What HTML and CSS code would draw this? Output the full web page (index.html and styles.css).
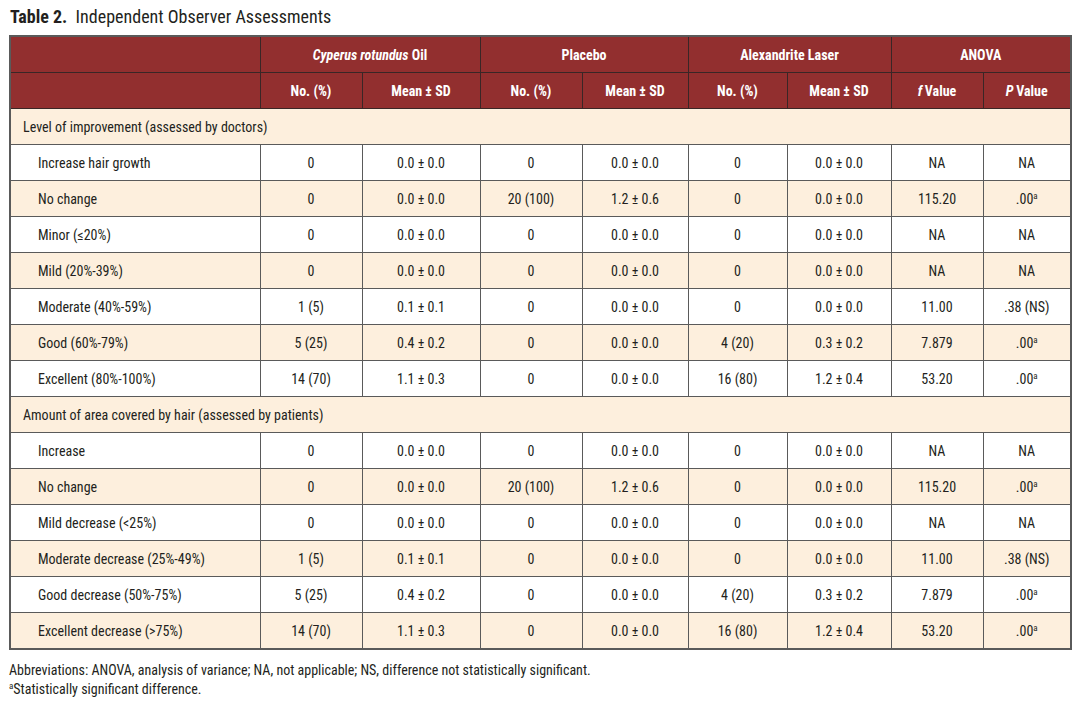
FILE: index.html
```html
<!DOCTYPE html>
<html>
<head>
<meta charset="utf-8">
<link rel="stylesheet" href="styles.css">
</head>
<body>
<div class="page">
  <h1 class="title"><b>Table 2.</b>&nbsp; Independent Observer Assessments</h1>
  <table class="tbl">
    <colgroup>
      <col class="c-label">
      <col class="c-a"><col class="c-b">
      <col class="c-a"><col class="c-c">
      <col class="c-d"><col class="c-e">
      <col class="c-f"><col class="c-g">
    </colgroup>
    <thead>
      <tr>
        <th></th>
        <th colspan="2"><i>Cyperus rotundus</i> Oil</th>
        <th colspan="2">Placebo</th>
        <th colspan="2">Alexandrite Laser</th>
        <th colspan="2">ANOVA</th>
      </tr>
      <tr>
        <th></th>
        <th>No. (%)</th><th>Mean ± SD</th>
        <th>No. (%)</th><th>Mean ± SD</th>
        <th>No. (%)</th><th>Mean ± SD</th>
        <th><i>f</i>&thinsp;Value</th><th><i>P</i>&thinsp;Value</th>
      </tr>
    </thead>
    <tbody>
      <tr class="sec"><td colspan="9">Level of improvement (assessed by doctors)</td></tr>
      <tr><td>Increase hair growth</td><td>0</td><td>0.0 ± 0.0</td><td>0</td><td>0.0 ± 0.0</td><td>0</td><td>0.0 ± 0.0</td><td>NA</td><td>NA</td></tr>
      <tr class="alt"><td>No change</td><td>0</td><td>0.0 ± 0.0</td><td>20 (100)</td><td>1.2 ± 0.6</td><td>0</td><td>0.0 ± 0.0</td><td>115.20</td><td>.00<sup>a</sup></td></tr>
      <tr><td>Minor (≤20%)</td><td>0</td><td>0.0 ± 0.0</td><td>0</td><td>0.0 ± 0.0</td><td>0</td><td>0.0 ± 0.0</td><td>NA</td><td>NA</td></tr>
      <tr class="alt"><td>Mild (20%-39%)</td><td>0</td><td>0.0 ± 0.0</td><td>0</td><td>0.0 ± 0.0</td><td>0</td><td>0.0 ± 0.0</td><td>NA</td><td>NA</td></tr>
      <tr><td>Moderate (40%-59%)</td><td>1 (5)</td><td>0.1 ± 0.1</td><td>0</td><td>0.0 ± 0.0</td><td>0</td><td>0.0 ± 0.0</td><td>11.00</td><td>.38 (NS)</td></tr>
      <tr class="alt"><td>Good (60%-79%)</td><td>5 (25)</td><td>0.4 ± 0.2</td><td>0</td><td>0.0 ± 0.0</td><td>4 (20)</td><td>0.3 ± 0.2</td><td>7.879</td><td>.00<sup>a</sup></td></tr>
      <tr><td>Excellent (80%-100%)</td><td>14 (70)</td><td>1.1 ± 0.3</td><td>0</td><td>0.0 ± 0.0</td><td>16 (80)</td><td>1.2 ± 0.4</td><td>53.20</td><td>.00<sup>a</sup></td></tr>
      <tr class="sec"><td colspan="9">Amount of area covered by hair (assessed by patients)</td></tr>
      <tr><td>Increase</td><td>0</td><td>0.0 ± 0.0</td><td>0</td><td>0.0 ± 0.0</td><td>0</td><td>0.0 ± 0.0</td><td>NA</td><td>NA</td></tr>
      <tr class="alt"><td>No change</td><td>0</td><td>0.0 ± 0.0</td><td>20 (100)</td><td>1.2 ± 0.6</td><td>0</td><td>0.0 ± 0.0</td><td>115.20</td><td>.00<sup>a</sup></td></tr>
      <tr><td>Mild decrease (&lt;25%)</td><td>0</td><td>0.0 ± 0.0</td><td>0</td><td>0.0 ± 0.0</td><td>0</td><td>0.0 ± 0.0</td><td>NA</td><td>NA</td></tr>
      <tr class="alt"><td>Moderate decrease (25%-49%)</td><td>1 (5)</td><td>0.1 ± 0.1</td><td>0</td><td>0.0 ± 0.0</td><td>0</td><td>0.0 ± 0.0</td><td>11.00</td><td>.38 (NS)</td></tr>
      <tr><td>Good decrease (50%-75%)</td><td>5 (25)</td><td>0.4 ± 0.2</td><td>0</td><td>0.0 ± 0.0</td><td>4 (20)</td><td>0.3 ± 0.2</td><td>7.879</td><td>.00<sup>a</sup></td></tr>
      <tr class="alt"><td>Excellent decrease (&gt;75%)</td><td>14 (70)</td><td>1.1 ± 0.3</td><td>0</td><td>0.0 ± 0.0</td><td>16 (80)</td><td>1.2 ± 0.4</td><td>53.20</td><td>.00<sup>a</sup></td></tr>
    </tbody>
  </table>
  <div class="notes">
    <p>Abbreviations: ANOVA, analysis of variance; NA, not applicable; NS, difference not statistically significant.</p>
    <p><sup>a</sup>Statistically significant difference.</p>
  </div>
</div>
</body>
</html>
```

FILE: styles.css
```css
html, body {
  margin: 0;
  padding: 0;
  background: #ffffff;
}
body {
  font-family: Roboto, "DejaVu Sans Condensed", sans-serif;
  font-stretch: 80%;
  color: #231f20;
}
.page {
  padding: 6px 0 0 9px;
  width: 1062px;
}
.title {
  margin: 0 0 7px 1px;
  font-size: 18px;
  font-weight: normal;
  line-height: 22px;
  color: #231f20;
}
.title b {
  font-weight: bold;
}
.tbl {
  border-collapse: collapse;
  table-layout: fixed;
  width: 1062px;
  border: 2px solid #5a5a5a;
  font-size: 14px;
}
.c-label { width: 250px; }
.c-a { width: 102px; }
.c-b { width: 118px; }
.c-c { width: 106px; }
.c-d { width: 99px; }
.c-e { width: 104px; }
.c-f { width: 92px; }
.c-g { width: 88px; }
.tbl th {
  background: #922f2f;
  color: #ffffff;
  font-weight: bold;
  height: 35px;
  padding: 0;
  border: 1px solid #3a2626;
  text-align: center;
}
.tbl th i {
  font-weight: bold;
}
.tbl td {
  height: 35px;
  padding: 0;
  border: 1px solid #5a5a5a;
  text-align: center;
  background: #ffffff;
}
.tbl td:first-child {
  text-align: left;
  padding-left: 27px;
}
.tbl tr.alt td {
  background: #fdefdd;
}
.tbl tr.sec td {
  background: #fdefdd;
  text-align: left;
  padding-left: 12px;
}
.tbl sup {
  font-size: 9px;
  line-height: 0;
  vertical-align: 5px;
}
.notes {
  margin-top: 11px;
  font-size: 14px;
  font-stretch: 80%;
  line-height: 19px;
}
.notes p {
  margin: 0;
}
.notes sup {
  font-size: 9px;
  line-height: 0;
  vertical-align: 5px;
}
```
